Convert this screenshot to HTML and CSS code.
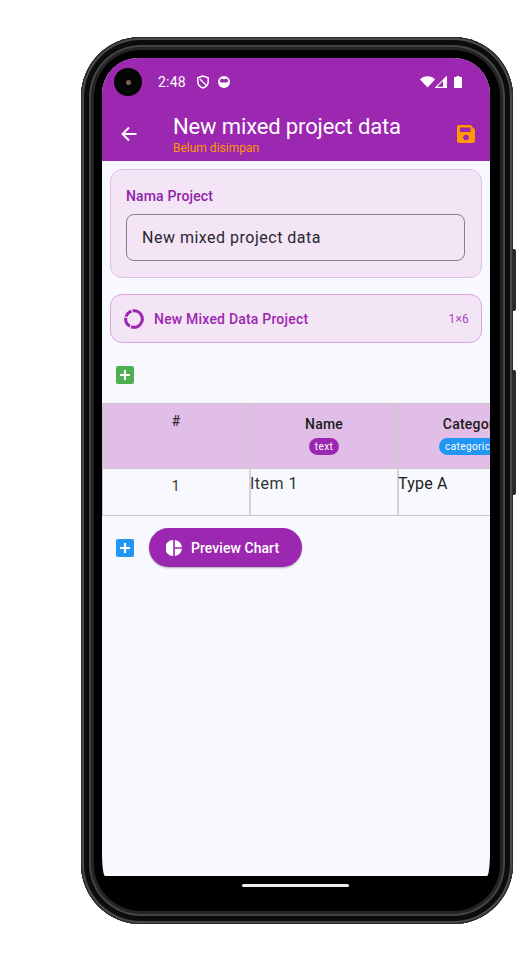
FILE: index.html
```html
<!DOCTYPE html>
<html lang="id">
<head>
<meta charset="utf-8">
<title>New mixed project data</title>
<link rel="stylesheet" href="styles.css">
</head>
<body>
<div class="phone">
  <span class="side-btn side-btn-power"></span>
  <span class="side-btn side-btn-volume"></span>
  <div class="bezel">
    <div class="screen">
      <header class="appbar">
        <div class="statusbar">
          <span class="camera"><span class="lens"></span></span>
          <span class="time">2:48</span>
          <svg class="st-icon" viewBox="0 0 14 14"><path d="M7 1 1.800 2.800v3.800c0 3 2.200 5.500 5.200 6.400 3-.9 5.200-3.400 5.200-6.400V2.800z" fill="none" stroke="#fff" stroke-width="1.500"/><path d="M3.800 4 10.500 10.500" stroke="#fff" stroke-width="1.300"/></svg>
          <svg class="st-icon st-icon-b" viewBox="0 0 14 14"><circle cx="7" cy="7" r="6" fill="#fff"/><path d="M2.500 6.500c.6-.4.800-1.600 1.200-3 1 .5 2.200.7 3.300.7s2.300-.2 3.300-.7c.4 1.400.6 2.600 1.200 3-1.300 1-3 1.100-4.500 1.100s-3.200-.1-4.500-1.100z" fill="#9c27b0"/></svg>
          <span class="st-spacer"></span>
          <svg class="st-wifi" viewBox="0 0 15 12"><path d="M0 3.500C2 1.400 4.600.3 7.500.3S13 1.400 15 3.500L7.500 11.500z" fill="#fff"/></svg>
          <svg class="st-signal" viewBox="0 0 12 12"><path d="M11.300.9v10.500H.8z" fill="none" stroke="#fff" stroke-width="1.100"/><path d="M8 4.200 11.500 1v11H8z" fill="#fff"/></svg>
          <svg class="st-batt" viewBox="0 0 8 12"><path d="M2.500 0h3v1H8v11H0V1h2.500z" fill="#fff"/></svg>
        </div>
        <div class="toolbar">
          <svg class="back" viewBox="0 0 16 16"><path d="M15.500 8H1.800M8 1.500 1.500 8 8 14.500" fill="none" stroke="#fff" stroke-width="1.900"/></svg>
          <div class="titles">
            <div class="title">New mixed project data</div>
            <div class="subtitle">Belum disimpan</div>
          </div>
          <svg class="save" viewBox="0 0 18 18"><path d="M2 0h11.500L18 4.500V16a2 2 0 0 1-2 2H2a2 2 0 0 1-2-2V2a2 2 0 0 1 2-2zm1 2.500V7h10.500V2.500z" fill="#FF9800" fill-rule="evenodd"/><circle cx="9" cy="12.500" r="2.800" fill="#9C27B0"/></svg>
        </div>
      </header>
      <main class="content">
        <section class="card name-card">
          <label class="card-label">Nama Project</label>
          <div class="input">New mixed project data</div>
        </section>
        <section class="card chart-card">
          <svg class="ring" viewBox="0 0 20 20"><circle cx="10" cy="10" r="8.300" fill="none" stroke="#9C27B0" stroke-width="3" stroke-dasharray="26 1.200 10 1.200 8 1.200 5.500 1.200" transform="rotate(-70 10 10)"/></svg>
          <span class="chart-name">New Mixed Data Project</span>
          <span class="chart-size">1×6</span>
        </section>
        <div class="add-col-row">
          <button class="add add-green"><svg viewBox="0 0 18 18"><path d="M9 4v10M4 9h10" stroke="#fff" stroke-width="2.200"/></svg></button>
        </div>
        <div class="table">
          <div class="tr thead">
            <div class="th th-index">#</div>
            <div class="th"><span class="th-name">Name</span><span class="pill pill-purple">text</span></div>
            <div class="th"><span class="th-name">Category</span><span class="pill pill-blue">categorical</span></div>
          </div>
          <div class="tr tbody">
            <div class="td td-index">1</div>
            <div class="td">Item 1</div>
            <div class="td td-strong">Type A</div>
          </div>
        </div>
        <div class="actions">
          <button class="add add-blue"><svg viewBox="0 0 18 18"><path d="M9 4v10M4 9h10" stroke="#fff" stroke-width="2.200"/></svg></button>
          <button class="preview">
            <svg class="pie" viewBox="0 0 16 16"><path d="M7.200 0v16A8 8 0 0 1 7.200 0zM8.800 0A8 8 0 0 1 16 7.200H8.800zM8.800 8.800H16A8 8 0 0 1 8.800 16z" fill="#fff"/></svg>
            <span>Preview Chart</span>
          </button>
        </div>
      </main>
    </div>
    <div class="navbar"><span class="home"></span></div>
  </div>
</div>
</body>
</html>
```
FILE: styles.css
```css
* { box-sizing: border-box; }
html, body { margin: 0; padding: 0; background: #fff; }
body { width: 521px; height: 968px; overflow: hidden; font-family: Roboto, "Liberation Sans", sans-serif; color: #1d1b20; }

.phone {
  position: relative;
  width: 432px;
  height: 887px;
  margin: 37px 0 0 81px;
  border-radius: 60px;
  background: #000;
  box-shadow: inset 0 0 0 1px #2a2a2a, inset 0 0 0 3px #4a4a4a, inset 0 0 0 8px #0c0c0c, inset 0 0 0 10px #444, inset 0 0 0 13px #242424;
}
.side-btn { position: absolute; left: 432px; width: 3px; background: #2a2a2a; border-radius: 0 2px 2px 0; }
.side-btn-power { top: 212px; height: 62px; }
.side-btn-volume { top: 333px; height: 125px; }

.bezel { display: flex; flex-direction: column; height: 100%; padding: 21px 23px 0 21px; }
.screen {
  flex: none;
  width: 388px;
  height: 818px;
  background: #f8f9ff;
  overflow: hidden;
  border-radius: 36px 36px 3px 3px / 36px 36px 24px 24px;
}
.navbar { flex: 1; display: flex; justify-content: center; padding-top: 8px; }
.home { width: 107px; height: 3px; border-radius: 2px; background: #eee; margin-right: 1px; }

.appbar { height: 103px; background: #9c27b0; color: #fff; }
.statusbar { display: flex; align-items: center; height: 48px; padding: 0 28px 0 12px; }
.camera { display: flex; align-items: center; justify-content: center; width: 28px; height: 28px; border-radius: 50%; background: #050505; margin-right: 16px; }
.lens { width: 5px; height: 5px; border-radius: 50%; background: #77634f; }
.time { font-size: 14px; letter-spacing: 0.2px; width: 36px; }
.st-icon { width: 14px; height: 14px; margin-left: 2px; }
.st-icon-b { margin-left: 7px; }
.st-spacer { flex: 1; }
.st-wifi { width: 15px; height: 12px; }
.st-signal { width: 12px; height: 12px; margin-left: 0; }
.st-batt { width: 8px; height: 12px; margin-left: 7px; }

.toolbar { display: flex; align-items: flex-start; height: 55px; padding-left: 19px; }
.back { width: 16px; height: 16px; margin-top: 20px; }
.titles { flex: 1; padding-left: 36px; padding-top: 8px; }
.title { font-size: 22px; line-height: 26px; letter-spacing: -0.14px; }
.subtitle { font-size: 12px; line-height: 15px; margin-top: 1px; color: #ff9800; }
.save { width: 18px; height: 18px; margin: 19px 15px 0 0; }

.content { display: flex; flex-direction: column; padding-top: 8px; }
.card { margin: 0 8px; border: 1px solid #e1bee7; border-radius: 12px; background: #f3e5f5; }
.name-card { height: 109px; padding: 16px 15px 0; }
.card-label { display: block; font-size: 14px; line-height: 20px; font-weight: 500; color: #8e24aa; letter-spacing: 0.15px; }
.input {
  width: 339px;
  height: 47px;
  margin-top: 8px;
  padding-left: 15px;
  border: 1px solid #857e8c;
  border-radius: 8px;
  font-size: 16px;
  line-height: 45px;
  letter-spacing: 0.5px;
  color: #2a2730;
}
.chart-card { display: flex; align-items: center; height: 49px; margin-top: 16px; padding: 0 12px 0 13px; border-color: #d9a6e4; }
.ring { width: 20px; height: 20px; }
.chart-name { flex: 1; margin-left: 10px; font-size: 14px; font-weight: 500; color: #9c27b0; letter-spacing: 0.2px; }
.chart-size { font-size: 12px; color: #ab47bc; letter-spacing: 0.2px; }

.add-col-row { padding: 23px 14px 0; height: 60px; }
.add { display: block; width: 18px; height: 18px; padding: 0; border: 0; border-radius: 2px; }
.add svg { display: block; width: 18px; height: 18px; }
.add-green { background: #4caf50; }
.add-blue { background: #2196f3; }

.table { width: 600px; border-top: 1px solid #c9c5ca; border-bottom: 1px solid #c9c5ca; border-left: 1px solid #c9c5ca; }
.tr { display: flex; }
.thead { height: 65px; background: #e1bee7; border-bottom: 1px solid #c9c5ca; }
.tbody { height: 46px; }
.th, .td { flex: none; width: 148px; border-right: 2px solid #d6d3d8; }
.th { display: flex; flex-direction: column; align-items: center; padding-top: 11px; font-size: 14px; font-weight: 500; }
.thead .th { border-right-color: #cfc6d2; }
.th-name { line-height: 18px; letter-spacing: 0.2px; }
.th-index { padding-top: 9px; color: #3a363b; }
.pill { margin-top: 5px; padding: 0 6px; height: 17px; line-height: 17px; border-radius: 9px; font-size: 10px; font-weight: 400; color: #fff; letter-spacing: 0.4px; }
.pill-purple { background: #9c27b0; }
.pill-blue { background: #2196f3; }
.td { font-size: 16px; line-height: 28px; padding-top: 1px; text-indent: -1px; letter-spacing: 0.5px; color: #333; }
.td-index { text-align: center; padding-top: 3px; text-indent: 0; font-size: 14px; }
.td-strong { color: #1d1b20; letter-spacing: 0.2px; }

.actions { display: flex; align-items: center; gap: 15px; padding: 12px 14px 0; }
.preview {
  display: flex;
  align-items: center;
  gap: 9px;
  width: 153px;
  height: 39px;
  padding: 0 0 0 17px;
  border: 0;
  border-radius: 20px;
  background: #9c27b0;
  color: #fff;
  font-family: Roboto, "Liberation Sans", sans-serif;
  font-size: 14px;
  font-weight: 500;
  letter-spacing: 0.05px;
  box-shadow: 0 1px 2px rgba(0,0,0,.3);
}
.pie { width: 16px; height: 16px; }
```
